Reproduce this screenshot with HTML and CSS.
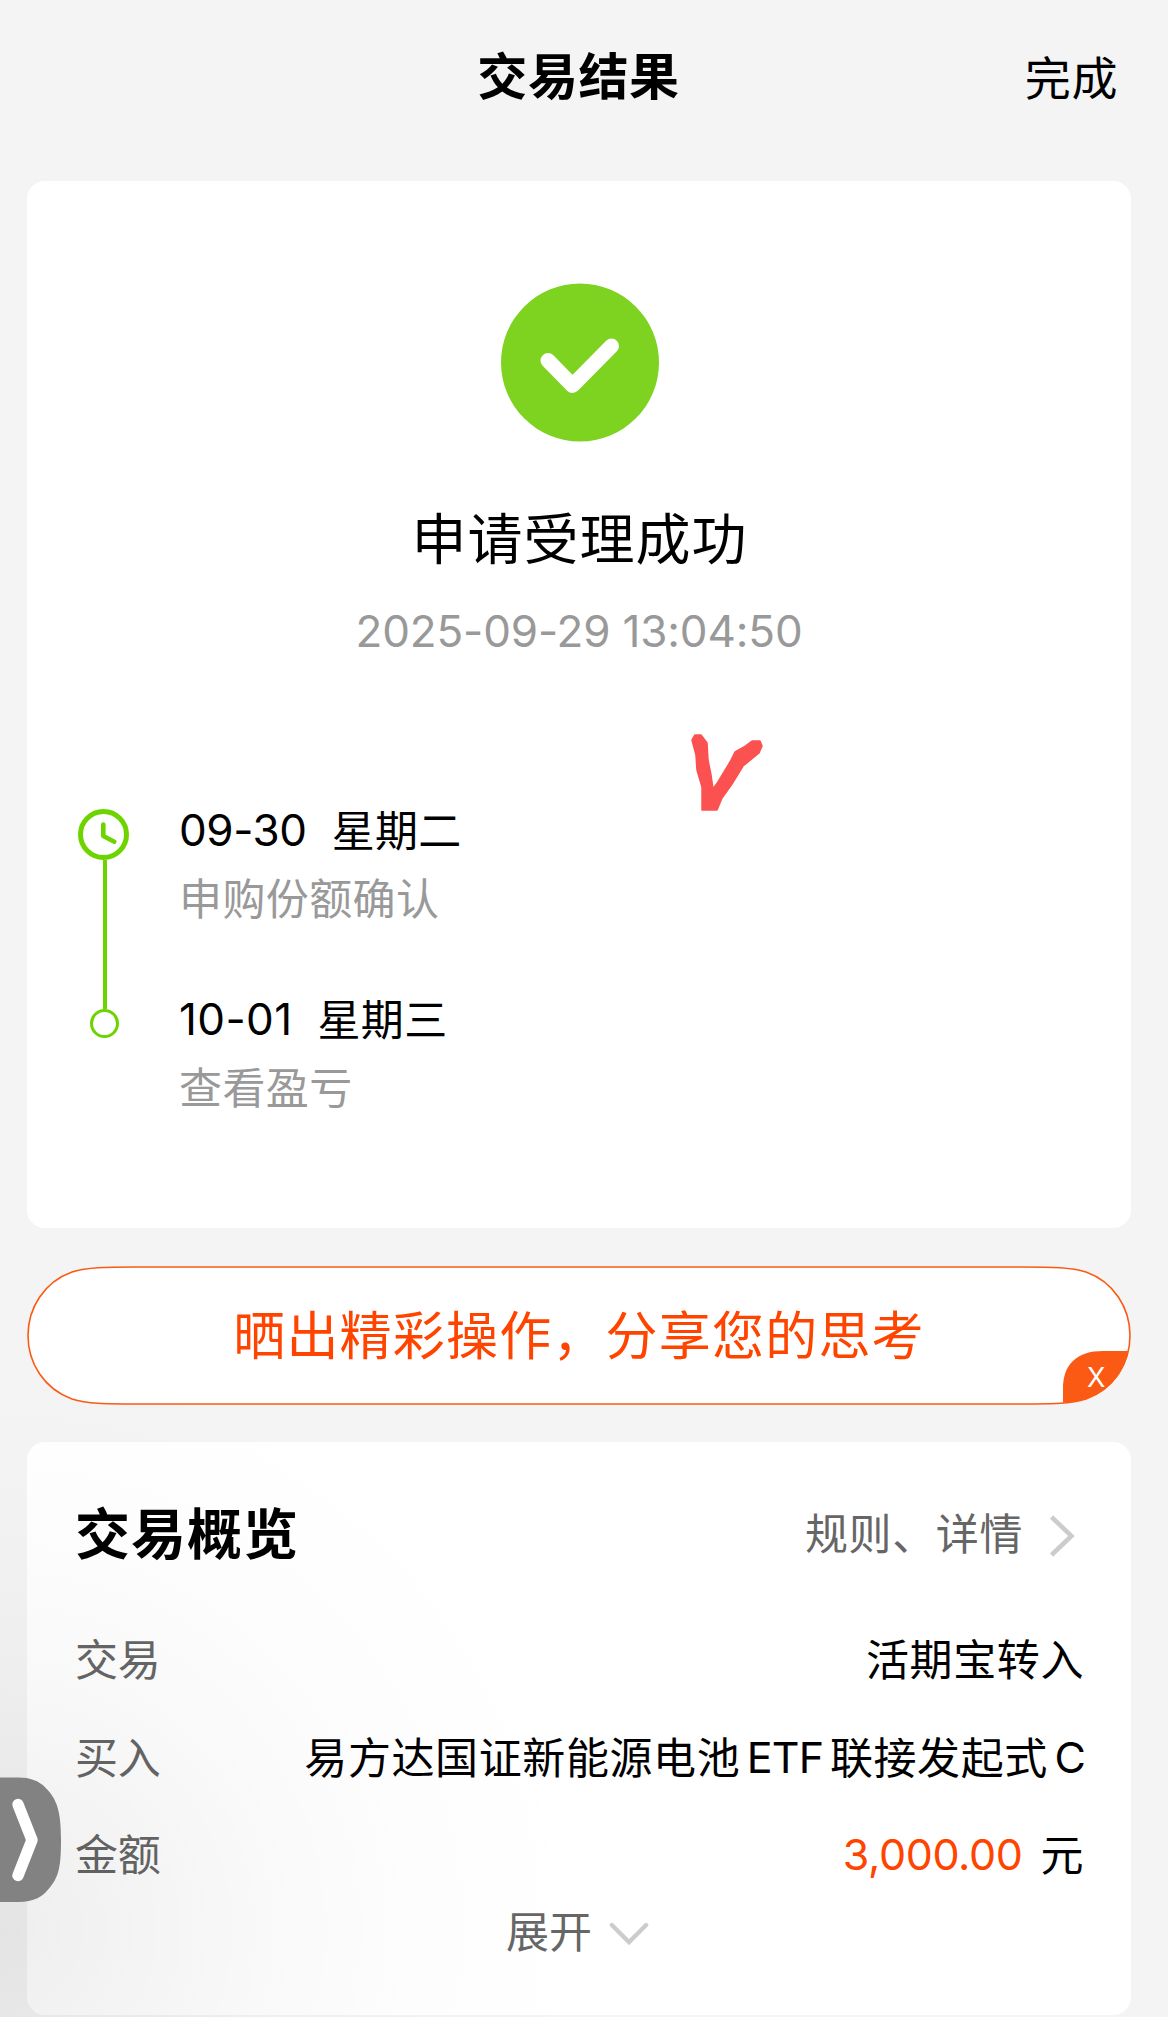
FILE: index.html
```html
<!DOCTYPE html>
<html lang="zh-CN">
<head>
<meta charset="utf-8">
<title>交易结果</title>
<link rel="stylesheet" href="styles.css">
</head>
<body>
<div class="page">
  <header class="topbar">
    <h1 class="topbar-title">交易结果</h1>
    <a class="topbar-done">完成</a>
  </header>

  <main class="content">
    <section class="card result">
      <svg class="result-icon" viewBox="0 0 159 159">
        <circle cx="80" cy="79.5" r="79" fill="#7ed321"/>
        <path d="M48 77.5 L72.5 102.5 L111.5 63" fill="none" stroke="#fff" stroke-width="15" stroke-linecap="round" stroke-linejoin="round"/>
      </svg>
      <h2 class="result-title">申请受理成功</h2>
      <p class="result-time">2025-09-29 13:04:50</p>

      <div class="timeline">
        <div class="rail">
          <svg class="rail-clock" viewBox="0 0 51 51">
            <circle cx="25.5" cy="25.5" r="23" fill="none" stroke="#6dd400" stroke-width="5"/>
            <path d="M25.3 15.5 V27 L36.3 32.7" fill="none" stroke="#6dd400" stroke-width="4.6" stroke-linecap="round" stroke-linejoin="round"/>
          </svg>
          <div class="rail-line"></div>
          <div class="rail-dot"></div>
        </div>
        <ol class="steps">
          <li class="step">
            <p class="step-date"><span class="day">09-30</span><span>星期二</span></p>
            <p class="step-note">申购份额确认</p>
          </li>
          <li class="step">
            <p class="step-date"><span class="day day-later">10-01</span><span>星期三</span></p>
            <p class="step-note">查看盈亏</p>
          </li>
        </ol>
      </div>

      <svg class="pen-mark" viewBox="0 0 72 82">
        <path d="M1 10 L4 5 L10 5 L16 13 L17 30 L20 45 L22 59 L27 52 L39 32 L44 22 L53 17 L61 11 L69 11 L71 16 L68 23 L52 36 L41 54 L31 68 L26 80 L11 80 L11 57 L6 40 L5 25 Z" fill="#fc5151" stroke="#fc5151" stroke-width="1.5" stroke-linejoin="round"/>
      </svg>
    </section>

    <section class="share">
      <svg class="share-frame" viewBox="0 0 1104 139">
        <path d="M1 69.5 C1 42 17 16 45 6 C60 1.2 78 1 110 1 H994 C1026 1 1044 1.2 1059 6 C1087 16 1103 42 1103 69.5 C1103 97 1087 123 1059 133 C1044 137.8 1026 138 994 138 H110 C78 138 60 137.8 45 133 C17 123 1 97 1 69.5 Z" fill="#fff" stroke="#fb5a14" stroke-width="1.6"/>
        <path d="M1036 136.8 V123 C1036 98 1050 85 1076 85 H1101.5 C1097 107 1083 124.5 1059 133 C1052 135.5 1044 136.6 1036 136.8 Z" fill="#fb5a14"/>
      </svg>
      <span class="share-text">晒出精彩操作，分享您的思考</span>
      <span class="share-close">X</span>
    </section>

    <section class="card overview">
      <div class="overview-head">
        <h2 class="overview-title">交易概览</h2>
        <a class="overview-link">规则、详情
          <svg class="chevron-right" viewBox="0 0 26 44">
            <path d="M2.5 3 L22.5 22 L2.5 41" fill="none" stroke="#ccc" stroke-width="4.5"/>
          </svg>
        </a>
      </div>
      <dl class="rows">
        <div class="row"><dt>交易</dt><dd>活期宝转入</dd></div>
        <div class="row"><dt>买入</dt><dd class="fund"><span>易方达国证新能源电池</span><span class="latin">ETF</span><span>联接发起式</span><span class="latin">C</span></dd></div>
        <div class="row"><dt>金额</dt><dd class="sum"><span class="amount">3,000.00</span><span>元</span></dd></div>
      </dl>
      <div class="expand">展开
        <svg class="chevron-down" viewBox="0 0 42 25">
          <path d="M3 3 L21 21 L39 3" fill="none" stroke="#ccc" stroke-width="4.5" stroke-linecap="round"/>
        </svg>
      </div>
    </section>
  </main>

  <div class="edge-shade"></div>
  <svg class="edge-handle" viewBox="0 0 62 126">
    <path d="M0 0.5 H18 C34 0.5 43 6 51 17 C58 27 61 38 61 63 C61 88 59 99 51 109 C43 120 34 125 18 125 H0 Z" fill="#828282"/>
    <path d="M18 27.5 L32 63 L18 98.5" fill="none" stroke="#fff" stroke-width="11.5" stroke-linecap="round" stroke-linejoin="round"/>
  </svg>
</div>
</body>
</html>
```
FILE: styles.css
```css
* { box-sizing: border-box; margin: 0; padding: 0; }

body {
  background: #f4f4f4;
  color: #000;
  font-family: Inter, "Noto Sans CJK SC", sans-serif;
  font-size: 43px;
  line-height: 50px;
  letter-spacing: 0.6px;
}

svg { display: block; flex: none; }
ol { list-style: none; }

.page {
  position: relative;
  width: 1168px;
  height: 2017px;
  overflow: hidden;
}

.topbar {
  display: grid;
  grid-template-columns: 1fr auto 1fr;
  align-items: start;
  height: 181px;
  padding: 47px 50px 0 39px;
}
.topbar-title {
  grid-column: 2;
  font-size: 50px;
  font-weight: 600;
  line-height: 60px;
}
.topbar-done {
  grid-column: 3;
  justify-self: end;
  padding-top: 1px;
  font-size: 46px;
  line-height: 60px;
}

.content {
  display: flex;
  flex-direction: column;
  padding: 0 37px 0 27px;
}

.card {
  border-radius: 18px;
  background: #fff;
}

.result {
  position: relative;
  display: flex;
  flex-direction: column;
  align-items: center;
  height: 1047px;
  padding-top: 102px;
}
.result-icon { width: 159px; height: 159px; }
.result-title {
  margin-top: 62px;
  padding-left: 1px;
  font-size: 55px;
  font-weight: 400;
  line-height: 70px;
  letter-spacing: 1px;
}
.result-time {
  margin-top: 35px;
  color: #999;
  font-size: 44px;
  line-height: 44px;
  letter-spacing: -0.15px;
}

.timeline {
  display: flex;
  align-self: stretch;
  gap: 50px;
  margin-top: 153px;
  padding-left: 50px;
}
.rail {
  display: flex;
  flex-direction: column;
  align-items: center;
  width: 52px;
  padding-top: 3px;
}
.rail-clock { width: 51px; height: 51px; }
.rail-line { width: 4px; height: 149px; margin-left: 3px; background: #6dd400; }
.rail-dot {
  width: 29px;
  height: 29px;
  margin-left: 3px;
  border: 3px solid #6dd400;
  border-radius: 50%;
}
.steps { display: flex; flex-direction: column; gap: 71px; }
.step-date { display: flex; gap: 25px; letter-spacing: 0.3px; }
.step-note { margin-top: 18px; color: #999; letter-spacing: 0.4px; }
.day { font-size: 44px; line-height: 48px; letter-spacing: -0.4px; }
.day-later { letter-spacing: 0.4px; }

/* hand-drawn tick over the card */
.pen-mark {
  position: absolute;
  left: 664px;
  top: 549px;
  width: 72px;
  height: 82px;
}

.share {
  position: relative;
  display: flex;
  justify-content: center;
  height: 139px;
  margin: 38px 0 37px;
  line-height: 142px;
}
.share-frame { position: absolute; inset: 0; width: 1104px; height: 139px; }
.share-text {
  position: relative;
  color: #ff4400;
  font-size: 52px;
  letter-spacing: 1.2px;
}
.share-close {
  position: absolute;
  left: 1060px;
  top: 97px;
  color: #fff;
  font-size: 27px;
  line-height: 30px;
}

.overview {
  height: 573px;
  padding: 60px 47px 0 48px;
}
.overview-head {
  display: flex;
  justify-content: space-between;
  height: 128px;
}
.overview-title {
  font-size: 55px;
  font-weight: 700;
  line-height: 64px;
  letter-spacing: 1px;
}
.overview-link {
  display: flex;
  align-items: center;
  gap: 26px;
  height: 64px;
  padding-right: 9px;
  color: #666;
}
.chevron-right { width: 26px; height: 44px; margin-top: 4px; }

.row {
  display: flex;
  justify-content: space-between;
  height: 97.5px;
  padding-top: 5px;
}
.row dt { color: #666; letter-spacing: -0.2px; }
.fund, .sum { display: flex; }
.fund { margin-right: -1px; }
.latin { padding: 0 6.5px; line-height: 48px; letter-spacing: -0.8px; }
.latin:last-child { padding-right: 0; }
.sum { gap: 18px; }
.amount { color: #ff4400; line-height: 48px; letter-spacing: -0.4px; }

.expand {
  display: flex;
  align-items: center;
  justify-content: center;
  gap: 17px;
  margin: -16px 4px 0 0;
  color: #666;
  letter-spacing: 0;
}
.chevron-down { width: 40px; height: 24px; margin-top: 4px; }

.edge-shade {
  position: absolute;
  inset: 0;
  background: radial-gradient(circle at 0 1930px, rgba(0,0,0,.065) 0, rgba(0,0,0,.046) 120px, rgba(0,0,0,.023) 270px, rgba(0,0,0,.008) 420px, transparent 600px);
}
.edge-handle {
  position: absolute;
  left: 0;
  top: 1777px;
  width: 62px;
  height: 126px;
}
```
